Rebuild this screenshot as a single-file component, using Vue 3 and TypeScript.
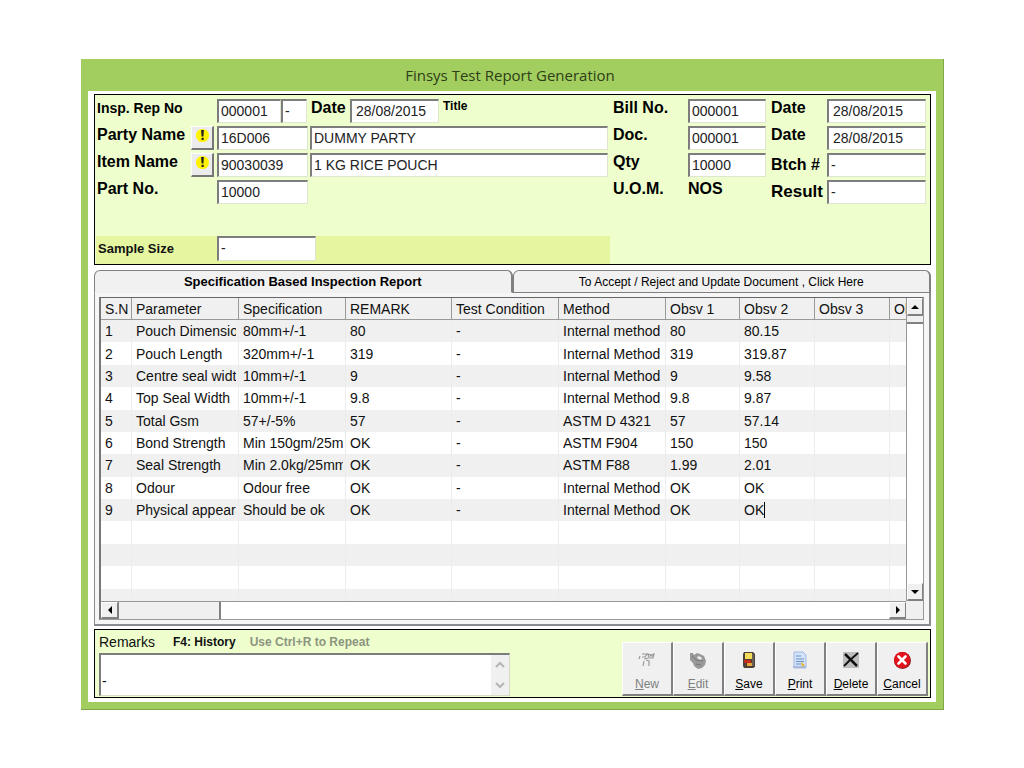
<script setup lang="ts">
import { reactive, ref } from 'vue'

interface Reading {
  parameter: string
  specification: string
  remark: string
  method: string
  first: string
  second: string
}

const form = reactive({
  reportNo: '000001',
  suffix: '-',
  reportDate: '28/08/2015',
  partyCode: '16D006',
  partyName: 'DUMMY PARTY',
  itemCode: '90030039',
  itemName: '1 KG RICE POUCH',
  partNo: '10000',
  billNo: '000001',
  billDate: '28/08/2015',
  docNo: '000001',
  docDate: '28/08/2015',
  qty: '10000',
  batch: '-',
  result: '-',
  sampleSize: '-',
  remarks: '\n-',
})

const activeTab = ref<'report' | 'decision'>('report')

const headings = ['S.N', 'Parameter', 'Specification', 'REMARK', 'Test Condition', 'Method', 'Obsv 1', 'Obsv 2', 'Obsv 3', 'Obsv 4']

const readings: Reading[] = [
  { parameter: 'Pouch Dimension', specification: '80mm+/-1', remark: '80', method: 'Internal method', first: '80', second: '80.15' },
  { parameter: 'Pouch Length', specification: '320mm+/-1', remark: '319', method: 'Internal Method', first: '319', second: '319.87' },
  { parameter: 'Centre seal width', specification: '10mm+/-1', remark: '9', method: 'Internal Method', first: '9', second: '9.58' },
  { parameter: 'Top Seal Width', specification: '10mm+/-1', remark: '9.8', method: 'Internal Method', first: '9.8', second: '9.87' },
  { parameter: 'Total Gsm', specification: '57+/-5%', remark: '57', method: 'ASTM D 4321', first: '57', second: '57.14' },
  { parameter: 'Bond Strength', specification: 'Min 150gm/25mm', remark: 'OK', method: 'ASTM F904', first: '150', second: '150' },
  { parameter: 'Seal Strength', specification: 'Min 2.0kg/25mm', remark: 'OK', method: 'ASTM F88', first: '1.99', second: '2.01' },
  { parameter: 'Odour', specification: 'Odour free', remark: 'OK', method: 'Internal Method', first: 'OK', second: 'OK' },
  { parameter: 'Physical appearance', specification: 'Should be ok', remark: 'OK', method: 'Internal Method', first: 'OK', second: 'OK' },
]
const blankRows = 4

const cells = (row: Reading, index: number): string[] => [
  String(index + 1), row.parameter, row.specification, row.remark, '-', row.method, row.first, row.second, '', '',
]
const hasCaret = (row: number, column: number): boolean => row === readings.length - 1 && column === 7
</script>

<template>
  <main class="desktop">
    <section class="window">
      <h1 class="title">Finsys Test Report Generation</h1>
      <div class="client">
        <form class="panel" @submit.prevent>
          <div class="fields">
            <label class="small" for="report-no">Insp. Rep No</label>
            <span></span>
            <div class="report-line">
              <input id="report-no" v-model="form.reportNo" class="w-no" />
              <input v-model="form.suffix" class="w-suffix" aria-label="Report suffix" />
              <label class="w-date-label" for="report-date">Date</label>
              <input id="report-date" v-model="form.reportDate" class="date w-date" />
              <span class="caption">Title</span>
            </div>
            <label for="bill-no">Bill No.</label>
            <input id="bill-no" v-model="form.billNo" class="w-ref" />
            <label for="bill-date">Date</label>
            <input id="bill-date" v-model="form.billDate" class="date" />

            <label for="party-code">Party Name</label>
            <button type="button" class="lookup" aria-label="Find party">
              <svg viewBox="0 0 16 16"><circle cx="8" cy="8" r="7" fill="#fff200" /><path d="M6.500 2h3l-.5 7H7zM7 10.300h2.300v2.400H7z" fill="#222" /></svg>
            </button>
            <input id="party-code" v-model="form.partyCode" class="w-code" />
            <input v-model="form.partyName" class="w-name" aria-label="Party full name" />
            <label for="doc-no">Doc.</label>
            <input id="doc-no" v-model="form.docNo" class="w-ref" />
            <label for="doc-date">Date</label>
            <input id="doc-date" v-model="form.docDate" class="date" />

            <label for="item-code">Item Name</label>
            <button type="button" class="lookup" aria-label="Find item">
              <svg viewBox="0 0 16 16"><circle cx="8" cy="8" r="7" fill="#fff200" /><path d="M6.500 2h3l-.5 7H7zM7 10.300h2.300v2.400H7z" fill="#222" /></svg>
            </button>
            <input id="item-code" v-model="form.itemCode" class="w-code" />
            <input v-model="form.itemName" class="w-name" aria-label="Item full name" />
            <label for="qty">Qty</label>
            <input id="qty" v-model="form.qty" class="w-ref" />
            <label class="level" for="batch">Btch #</label>
            <input id="batch" v-model="form.batch" />

            <label for="part-no">Part No.</label>
            <span></span>
            <input id="part-no" v-model="form.partNo" class="w-code" />
            <span></span>
            <span>U.O.M.</span>
            <span>NOS</span>
            <label class="huge level" for="result">Result</label>
            <input id="result" v-model="form.result" />
          </div>
          <div class="sample">
            <label for="sample-size">Sample Size</label>
            <input id="sample-size" v-model="form.sampleSize" />
          </div>
        </form>

        <section class="tabs">
          <div class="tab-row" role="tablist">
            <button type="button" role="tab" class="tab" :class="{ active: activeTab === 'report' }" :aria-selected="activeTab === 'report'" @click="activeTab = 'report'">Specification Based Inspection Report</button>
            <button type="button" role="tab" class="tab" :class="{ active: activeTab === 'decision' }" :aria-selected="activeTab === 'decision'" @click="activeTab = 'decision'">To Accept / Reject and Update Document , Click Here</button>
          </div>
          <div class="page">
            <div class="grid-frame">
              <div class="viewport">
                <table>
                  <colgroup>
                    <col class="c-sn" /><col class="c-wide" /><col class="c-wide" /><col class="c-remark" /><col class="c-wide" /><col class="c-wide" />
                    <col class="c-first" /><col class="c-obs" /><col class="c-obs" /><col class="c-obs" />
                  </colgroup>
                  <thead>
                    <tr><th v-for="name in headings" :key="name" scope="col">{{ name }}</th></tr>
                  </thead>
                  <tbody>
                    <tr v-for="(row, i) in readings" :key="row.parameter">
                      <td v-for="(text, c) in cells(row, i)" :key="c">
                        <div class="cell"><span :class="{ caret: hasCaret(i, c) }">{{ text }}</span></div>
                      </td>
                    </tr>
                    <tr v-for="n in blankRows" :key="'blank' + n"><td v-for="c in 10" :key="c"></td></tr>
                  </tbody>
                </table>
              </div>
              <div class="vbar">
                <button type="button" class="arrow" aria-label="Scroll up"><svg viewBox="0 0 10 10"><path d="M1 7l4-4 4 4z" /></svg></button>
                <div class="vthumb"></div>
                <button type="button" class="arrow end" aria-label="Scroll down"><svg viewBox="0 0 10 10"><path d="M1 3l4 4 4-4z" /></svg></button>
              </div>
              <div class="hbar">
                <button type="button" class="arrow" aria-label="Scroll left"><svg viewBox="0 0 10 10"><path d="M7 1L3 5l4 4z" /></svg></button>
                <div class="hthumb"></div>
                <button type="button" class="arrow end" aria-label="Scroll right"><svg viewBox="0 0 10 10"><path d="M3 1l4 4-4 4z" /></svg></button>
              </div>
            </div>
          </div>
        </section>

        <section class="panel footer">
          <div class="remarks">
            <div class="hints">
              <label for="remarks">Remarks</label>
              <strong>F4: History</strong>
              <strong class="muted">Use Ctrl+R to Repeat</strong>
            </div>
            <div class="memo">
              <textarea id="remarks" v-model="form.remarks"></textarea>
              <div class="memo-bar">
                <svg viewBox="0 0 10 10"><path d="M1 7l4-4 4 4" /></svg>
                <svg viewBox="0 0 10 10"><path d="M1 3l4 4 4-4" /></svg>
              </div>
            </div>
          </div>
          <div class="actions">
            <button type="button" disabled>
              <svg viewBox="0 0 20 20"><g stroke="#999" fill="none" stroke-width="1.200"><path d="M2 9l1-3M5 4h5l-2 3H5M11 4l3 1 3-1-1 4h-4zM13 6h3M7 9l4-1M7 11l-1 5M9 10l3 1v5" /></g></svg>
              <span><u>N</u>ew</span>
            </button>
            <button type="button" disabled>
              <svg viewBox="0 0 20 20"><path d="M2 3h3l1 2 3-2 3 1 4 2 2 5-1 4-3 3-4 1-4-3-1-3-3-3z" fill="#999" /><path d="M9 7l2-1 3 2-1 2-3-1z" fill="#e8e8e8" /><path d="M4 6l4 4 7 1M8 14l5 1" stroke="#777" fill="none" /></svg>
              <span><u>E</u>dit</span>
            </button>
            <button type="button">
              <svg viewBox="0 0 20 20"><path d="M5 2h9l2 2v13l-2 1H5l-1-2V4z" fill="#4c4036" /><path d="M6 3h7v6H6z" fill="#f2dc58" /><path d="M5 10h7v3H5z" fill="#c5291c" /><path d="M8 13h5v3H8z" fill="#e9a63c" /><path d="M14 4v12" stroke="#8b8175" /></svg>
              <span><u>S</u>ave</span>
            </button>
            <button type="button">
              <svg viewBox="0 0 20 20"><path d="M4 2h9l3 3v13H4z" fill="#d2e2f8" stroke="#a3b9e2" /><path d="M6 6h5M6 9h8M6 11.500h8M6 14h5" stroke="#6c91cf" /><path d="M3 16h13v2H3z" fill="#a9b8dc" /><path d="M11 12l4 3-3 2z" fill="#e5b637" /></svg>
              <span><u>P</u>rint</span>
            </button>
            <button type="button">
              <svg viewBox="0 0 20 20"><path d="M2 2h16v16H2z" fill="#bdbdbd" /><path d="M4 4l12 12" stroke="#111" stroke-width="2.500" /><path d="M17 3L9 10l-6 6" stroke="#111" stroke-width="1.800" fill="none" /></svg>
              <span><u>D</u>elete</span>
            </button>
            <button type="button">
              <svg viewBox="0 0 20 20"><circle cx="10.500" cy="10.500" r="8.500" fill="#8f1c1c" /><circle cx="10" cy="10" r="8" fill="#e3131b" /><path d="M6.500 6.500l7 7M13.500 6.500l-7 7" stroke="#fff" stroke-width="2.600" stroke-linecap="round" /></svg>
              <span><u>C</u>ancel</span>
            </button>
          </div>
        </section>
      </div>
    </section>
  </main>
</template>

<style>
body {
  margin: 0;
  background: #fff;
}
</style>

<style scoped>
* {
  box-sizing: border-box;
}
.desktop {
  padding: 59px 80px 58px 81px;
  font-family: "Liberation Sans", Arial, sans-serif;
  font-size: 14px;
  color: #111;
}
.window {
  background: #a2ce60;
  border-right: 1px solid #7fa748;
  border-bottom: 1px solid #7fa748;
  padding: 0 7px 7px;
}
.title {
  margin: 0;
  height: 32px;
  padding-right: 4px;
  line-height: 32px;
  text-align: center;
  font-family: "Open Sans", "Noto Sans", sans-serif;
  font-size: 15px;
  font-weight: 400;
  color: #2e3d17;
}
.client {
  background: #fff;
  padding: 3px 5px 4px 6px;
}
.panel {
  background: #eeffcd;
  border: 1px solid #000;
}
.fields {
  display: grid;
  grid-template-columns: 94px 26px 93px 1fr 75px 83px 56px 99px;
  grid-auto-rows: 27px;
  align-items: start;
  padding: 4px 4px 0 2px;
  font-size: 16px;
  font-weight: 700;
  line-height: 18px;
  color: #000;
}
.fields .small {
  font-size: 14px;
}
.fields .huge {
  font-size: 17px;
}
.fields .level {
  line-height: 24px;
}
input {
  width: 100%;
  min-width: 0;
  height: 24px;
  padding: 0 2px 2px;
  border: 1px solid #dfe6cf;
  border-top: 2px solid #7d7d7d;
  border-left: 2px solid #7d7d7d;
  border-radius: 0;
  background: #fff;
  font: 400 14px/19px "Liberation Sans", Arial, sans-serif;
  color: #222;
  outline: none;
}
.report-line {
  grid-column: 3 / 5;
  display: flex;
}
input.w-no {
  width: 64px;
}
input.w-suffix {
  width: 26px;
}
.w-date-label {
  width: 43px;
  padding-left: 4px;
}
input.w-date {
  width: 89px;
}
input.w-code {
  width: 91px;
}
input.w-name {
  width: calc(100% - 5px);
}
input.w-ref {
  width: 78px;
}
input.date {
  padding-left: 4px;
}
.caption {
  padding-left: 4px;
  font-size: 12px;
  line-height: 14px;
}
.lookup {
  width: 23px;
  height: 24px;
  padding: 0 0 4px;
  display: flex;
  align-items: center;
  justify-content: center;
  background: #ececec;
  border: 1px solid #fff;
  border-right: 2px solid #777;
  border-bottom: 2px solid #777;
}
.lookup svg {
  width: 15px;
  height: 15px;
}
.sample {
  display: flex;
  align-items: flex-start;
  height: 28px;
  margin: 29px 320px 0 1px;
  background: #e6f6a0;
  font-size: 13px;
  font-weight: 700;
  line-height: 26px;
}
.sample label {
  width: 121px;
  padding-left: 2px;
}
.sample input {
  width: 99px;
  height: 25px;
}
.tabs {
  margin-top: 5px;
}
.tab-row {
  display: flex;
}
.tab {
  flex: 1;
  height: 23px;
  padding: 0;
  border: 1px solid #808080;
  border-right-width: 2px;
  border-radius: 6px 6px 0 0;
  background: #f1f1f1;
  font: 400 12px/20px "Liberation Sans", Arial, sans-serif;
  color: #000;
}
.tab.active {
  border-bottom-color: #f1f1f1;
  font-size: 13px;
  font-weight: 700;
}
.page {
  padding: 4px 5px 4px 4px;
  background: #f6f6f6;
  border: 1px solid #8a8a8a;
  border-top: 0;
  border-right: 2px solid #8a8c90;
  border-bottom: 2px solid #8a8c90;
}
.grid-frame {
  display: grid;
  grid-template-columns: minmax(0, 1fr) 17px;
  grid-template-rows: 303px 18px;
  border: 1px solid #999;
  border-top-color: #666;
  border-left: 2px solid #777;
  background: #f0f0f0;
}
.viewport {
  overflow: hidden;
}
table {
  table-layout: fixed;
  width: 862px;
  height: 313px;
  border-collapse: separate;
  border-spacing: 0;
}
.c-sn {
  width: 31px;
}
.c-wide {
  width: 107px;
}
.c-remark {
  width: 106px;
}
.c-first {
  width: 74px;
}
.c-obs {
  width: 75px;
}
th,
td {
  height: 22px;
  padding: 0 2px 0 4px;
  overflow: hidden;
  white-space: nowrap;
  text-align: left;
  font-weight: 400;
  border-right: 1px solid #ececec;
}
th:first-child,
td:first-child {
  padding-right: 0;
}
th {
  background: #f0f0f0;
  border-right-color: #999;
  border-bottom: 1px solid #999;
}
tbody tr {
  background: #fff;
}
tbody tr:nth-child(odd) {
  background: #f0f0f0;
}
.cell {
  overflow: hidden;
}
.caret {
  border-right: 1px solid #000;
}
.vbar {
  display: flex;
  flex-direction: column;
  background: #fff;
  border-left: 1px solid #999;
}
.arrow {
  width: 17px;
  height: 18px;
  padding: 0;
  display: flex;
  align-items: center;
  justify-content: center;
  background: #f0f0f0;
  border: 1px solid #fff;
  border-right: 1px solid #808080;
  border-bottom: 2px solid #808080;
}
.vbar .arrow {
  width: 16px;
}
.arrow svg {
  width: 10px;
  height: 10px;
}
.vbar .end {
  margin-top: auto;
}
.vthumb {
  height: 8px;
  background: #f0f0f0;
  border-bottom: 2px solid #808080;
}
.hbar {
  display: flex;
  background: #fff;
  border-top: 1px solid #999;
}
.hbar .arrow {
  height: 17px;
}
.hthumb {
  width: 103px;
  background: #f0f0f0;
  border-left: 1px solid #808080;
  border-right: 2px solid #808080;
}
.hbar .end {
  margin-left: auto;
}
.footer {
  display: flex;
  justify-content: space-between;
  margin-top: 3px;
  height: 69px;
  padding: 0 2px 1px 4px;
}
.remarks {
  width: 411px;
}
.hints {
  display: flex;
  align-items: center;
  height: 23px;
  font-size: 12px;
}
.hints label {
  width: 74px;
  font-size: 14px;
}
.hints .muted {
  margin-left: 14px;
  color: #8c9480;
}
.memo {
  display: flex;
  height: 43px;
  border: 1px solid #d5dcc5;
  border-top: 2px solid #7d7d7d;
  border-left: 2px solid #7d7d7d;
  background: #fff;
}
textarea {
  flex: 1;
  padding: 1px;
  border: 0;
  resize: none;
  overflow: hidden;
  background: #fff;
  font: 400 14px/17px "Liberation Sans", Arial, sans-serif;
  color: #111;
  outline: none;
}
.memo-bar {
  width: 18px;
  display: flex;
  flex-direction: column;
  align-items: center;
  justify-content: space-between;
  padding: 5px 0;
  background: #f0f0f0;
}
.memo-bar svg {
  width: 10px;
  height: 10px;
  fill: none;
  stroke: #b5b5b5;
  stroke-width: 2;
}
.actions {
  display: flex;
  margin-top: 12px;
}
.actions button {
  width: 51px;
  padding: 7px 0 0;
  display: flex;
  flex-direction: column;
  align-items: center;
  gap: 6px;
  background: #f0f0f0;
  border: 1px solid #fff;
  border-right: 2px solid #808080;
  border-bottom: 2px solid #808080;
  font: 400 12px/16px "Liberation Sans", Arial, sans-serif;
  color: #000;
}
.actions button:disabled {
  color: #808080;
}
.actions svg {
  width: 20px;
  height: 20px;
}
</style>
